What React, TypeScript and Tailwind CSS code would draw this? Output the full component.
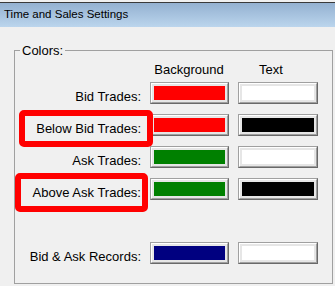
import React from 'react';

interface ColorRow {
  label: string;
  bg: string;
  text: string;
  spaced?: boolean;
}

const rows: ColorRow[] = [
  { label: 'Bid Trades:', bg: 'bg-[#ff0000]', text: 'bg-white' },
  { label: 'Below Bid Trades:', bg: 'bg-[#ff0000]', text: 'bg-black' },
  { label: 'Ask Trades:', bg: 'bg-[#008000]', text: 'bg-white' },
  { label: 'Above Ask Trades:', bg: 'bg-[#008000]', text: 'bg-black' },
  { label: 'Bid & Ask Records:', bg: 'bg-[#000080]', text: 'bg-white', spaced: true },
];

const ColorButton = ({ fill, width }: { fill: string; width: string }) => (
  <button
    className={`${width} h-[22px] flex-shrink-0 border border-t-[#a0a0a0] border-l-[#a0a0a0] border-b-[#696969] border-r-[#696969] bg-[#f0f0f0]`}
  >
    <div className="w-full h-full border border-t-white border-l-white border-b-[#a0a0a0] border-r-[#a0a0a0] bg-[#e6e6e6] p-[2px]">
      <div className={`w-full h-full ${fill}`}></div>
    </div>
  </button>
);

export default function App() {
  return (
    <div
      className="relative w-[335px] h-[286px] bg-[#f0f0f0] overflow-hidden text-black"
      style={{ fontFamily: '"Liberation Sans", Arial, sans-serif' }}
    >
      {/* Title bar */}
      <div className="h-[2px] bg-[#f0f0f0]"></div>
      <div className="h-[1px] bg-[#3a3a3a]"></div>
      <div className="h-[24px] bg-gradient-to-b from-[#94b1d1] to-[#bbd5ed] flex items-center pl-[4px] text-[11.5px]">
        Time and Sales Settings
      </div>

      {/* Group box */}
      <fieldset className="ml-[14px] mt-[16px] w-[319px] h-[241px] border border-[#a0a0a0]">
        <legend className="ml-[5px] px-[2px] text-[13px] leading-[15px]">Colors:</legend>

        <div className="flex text-[13px] leading-[15px] mt-[4px] ml-[137px]">
          <div className="w-[74px] text-center">Background</div>
          <div className="w-[40px] text-center ml-[25px]">Text</div>
        </div>

        <div className="flex flex-col mt-[8px]">
          {rows.map((row, i) => (
            <div
              key={row.label}
              className={`flex items-center h-[22px] ${row.spaced ? 'mt-[42px]' : i === 0 ? '' : 'mt-[10px]'}`}
            >
              <div className="w-[126px] text-right text-[13px] leading-[15px]">{row.label}</div>
              <div className="ml-[9px]">
                <ColorButton fill={row.bg} width="w-[79px]" />
              </div>
              <div className="ml-[9px]">
                <ColorButton fill={row.text} width="w-[80px]" />
              </div>
            </div>
          ))}
        </div>
      </fieldset>

      {/* Annotation highlights */}
      <div className="absolute left-[19px] top-[110px] w-[134px] h-[37px] border-[6px] border-[#ff0000] rounded-[5px]"></div>
      <div className="absolute left-[15px] top-[173px] w-[133px] h-[39px] border-[6px] border-[#ff0000] rounded-[5px]"></div>
    </div>
  );
}
